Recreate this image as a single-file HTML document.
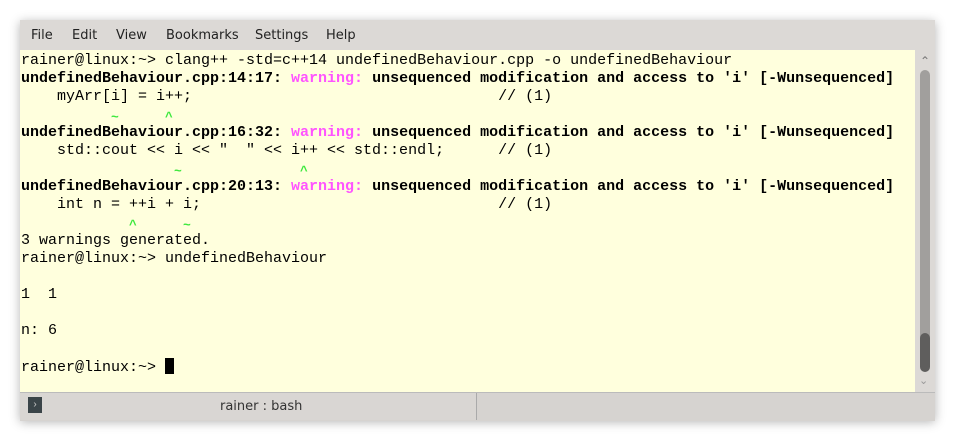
<!DOCTYPE html>
<html><head><style>
body{margin:0;width:955px;height:440px;background:#fff;position:relative;overflow:hidden;font-family:"Liberation Sans",sans-serif}
.win{position:absolute;left:20px;top:20px;width:915px;height:400px;background:#dcd9d6;box-shadow:0 2px 10px rgba(0,0,0,0.3)}
.menu{position:absolute;left:0;top:0;height:30px;width:915px;font-family:"DejaVu Sans",sans-serif;font-size:13px;color:#222}
.menu span{position:absolute;top:8px}
.term{position:absolute;left:0;top:30px;width:895px;height:342px;background:#ffffdd;overflow:hidden}
pre{margin:0;font-family:"Liberation Mono",monospace;font-size:15px;line-height:18px;color:#000;position:absolute;left:1px;top:2px}
b{font-weight:bold}.m{color:#ff54ff}.g{color:#3ee83e;font-weight:bold;font-size:13px;letter-spacing:1.2px;position:relative;top:3px}
.cur{display:inline-block;width:9px;height:16px;background:#000;vertical-align:-3px}
.tabs{position:absolute;left:0;top:372px;width:915px;height:28px;background:#d6d3d0;border-top:1px solid #bbb}
.tab1{position:absolute;left:0;top:0;width:456px;height:27px;border-right:1px solid #aaa;background:#d9d6d3}
</style></head><body>
<div class="win">
<div class="menu"><span style="left:11px">File</span><span style="left:52px">Edit</span><span style="left:96px">View</span><span style="left:146px">Bookmarks</span><span style="left:235px">Settings</span><span style="left:306px">Help</span></div>
<div class="term"><pre>rainer@linux:~&gt; clang++ -std=c++14 undefinedBehaviour.cpp -o undefinedBehaviour
<b>undefinedBehaviour.cpp:14:17: <span class="m">warning:</span> unsequenced modification and access to 'i' [-Wunsequenced]</b>
    myArr[i] = i++;                                  // (1)
<span class="g">          ~     ^</span>
<b>undefinedBehaviour.cpp:16:32: <span class="m">warning:</span> unsequenced modification and access to 'i' [-Wunsequenced]</b>
    std::cout &lt;&lt; i &lt;&lt; "  " &lt;&lt; i++ &lt;&lt; std::endl;      // (1)
<span class="g">                 ~             ^</span>
<b>undefinedBehaviour.cpp:20:13: <span class="m">warning:</span> unsequenced modification and access to 'i' [-Wunsequenced]</b>
    int n = ++i + i;                                 // (1)
<span class="g">            ^     ~</span>
3 warnings generated.
rainer@linux:~&gt; undefinedBehaviour

1  1

n: 6

rainer@linux:~&gt; <span class="cur"></span></pre></div>
<div style="position:absolute;left:900px;top:34px;font-size:12px;color:#777">&#8963;</div>
<div style="position:absolute;left:900px;top:50px;width:10px;height:283px;background:#a19f9d;border-radius:5px"></div>
<div style="position:absolute;left:900px;top:313px;width:10px;height:39px;background:#5f5e5d;border-radius:5px"></div>
<div style="position:absolute;left:899px;top:354px;font-size:11px;color:#999">&#8964;</div>
<div class="tabs"><div class="tab1"><div style="position:absolute;left:8px;top:4px;width:14px;height:16px;background:#3a4448;color:#ccc;font-size:10px;text-align:center;line-height:16px">&#8250;</div><div style="position:absolute;left:200px;top:6px;font-size:13px;color:#333;font-family:'DejaVu Sans',sans-serif">rainer : bash</div></div></div>
</div>
</body></html>
